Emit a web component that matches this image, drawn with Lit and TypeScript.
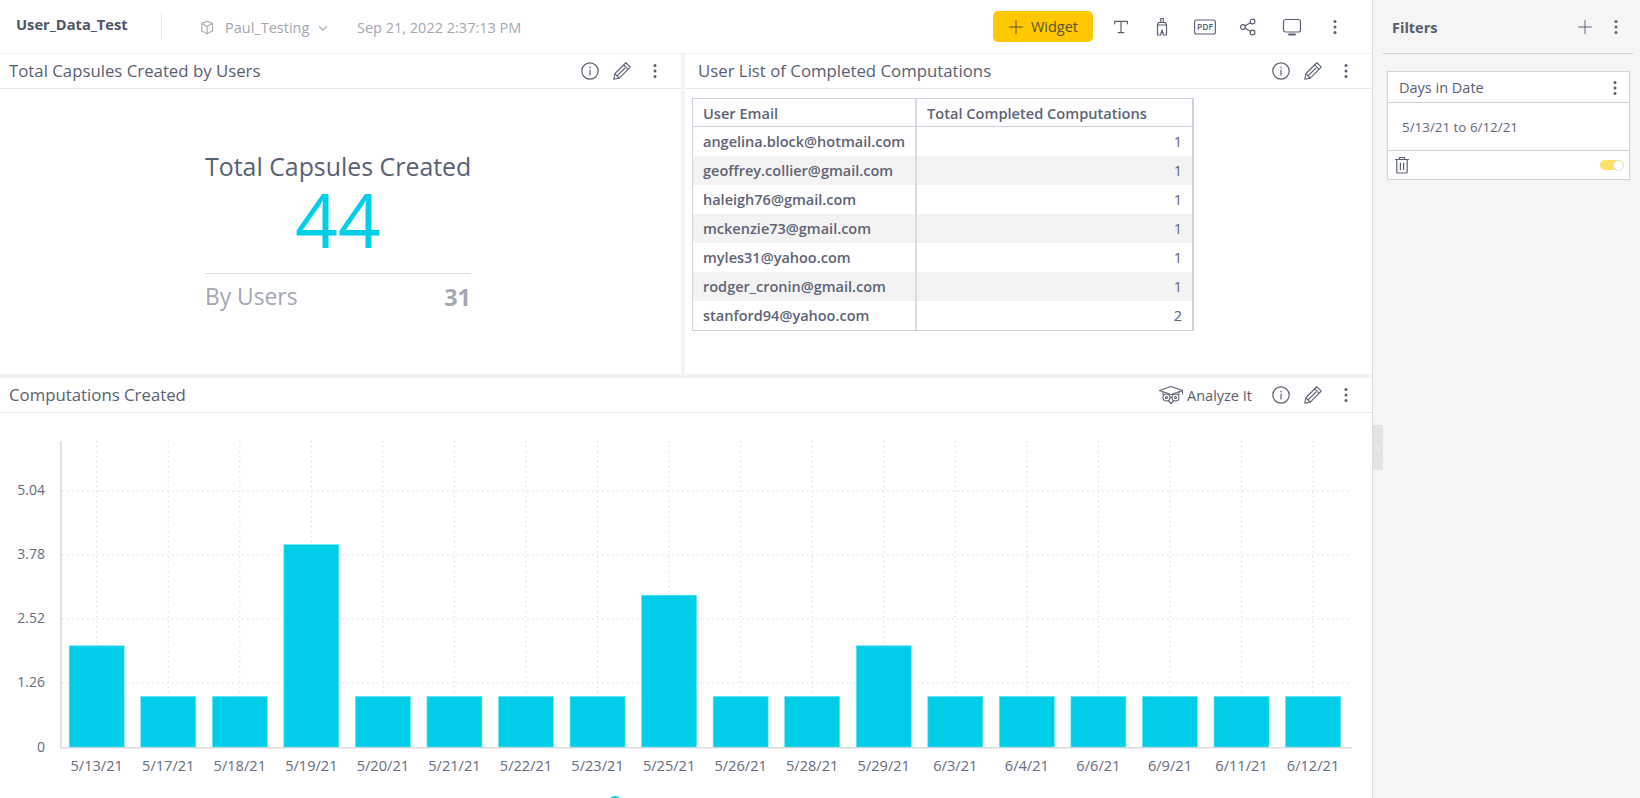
import { html, LitElement, css, svg } from "lit";
import { customElement } from "lit/decorators.js";
import { map } from "lit/directives/map.js";

const users = [
  ["angelina.block@hotmail.com", 1],
  ["geoffrey.collier@gmail.com", 1],
  ["haleigh76@gmail.com", 1],
  ["mckenzie73@gmail.com", 1],
  ["myles31@yahoo.com", 1],
  ["rodger_cronin@gmail.com", 1],
  ["stanford94@yahoo.com", 2],
];

const bars: [string, number][] = [
  ["5/13/21", 2],
  ["5/17/21", 1],
  ["5/18/21", 1],
  ["5/19/21", 4],
  ["5/20/21", 1],
  ["5/21/21", 1],
  ["5/22/21", 1],
  ["5/23/21", 1],
  ["5/25/21", 3],
  ["5/26/21", 1],
  ["5/28/21", 1],
  ["5/29/21", 2],
  ["6/3/21", 1],
  ["6/4/21", 1],
  ["6/6/21", 1],
  ["6/9/21", 1],
  ["6/11/21", 1],
  ["6/12/21", 1],
];

const ticks = ["1.26", "2.52", "3.78", "5.04"];

const icon = (w: number, body: unknown, sw = 1.2) =>
  html`<svg class="icon" width=${w} height=${w} viewBox="0 0 20 20" fill="none" stroke="currentColor" stroke-width=${sw} stroke-linecap="round" stroke-linejoin="round" aria-hidden="true">${body}</svg>`;

const info = icon(20, svg`<circle cx="10" cy="10" r="8.2"/><path d="M10 9v5M10 6.2v.6"/>`);
const pencil = icon(22, svg`<path d="M2.5 17.5l1-5L13.5 2.5l4 4L7.5 16.5zM3.5 12.5l4 4M11.5 4.5l4 4M5.5 14.5l7-7"/>`, 1);
const kebab = html`<svg class="icon" width="6" height="16" viewBox="0 0 6 16" fill="#5a6172" aria-hidden="true"><circle cx="3" cy="2.5" r="1.5"/><circle cx="3" cy="8" r="1.5"/><circle cx="3" cy="13.5" r="1.5"/></svg>`;
const cube = icon(18, svg`<path d="M9 2.5l6 2.6v8L9 16.5l-6-3.4v-8zM3 5.1l6 2.9 6-2.9M9 8v8.5"/>`);
const chevron = icon(12, svg`<path d="M4 7.5l6 6 6-6" stroke-width="1.8"/>`);
const plus = icon(16, svg`<path d="M10 2v16M2 10h16"/>`);
const textT = icon(16, svg`<path d="M2 6V3h16v3M10 3v14M6.5 17h7"/>`, 1.5);
const brush = icon(20, svg`<path d="M8.7 1.5h2.6v4H8.7zM5.5 8l1-2.5h7l1 2.5zM5.5 8v10h3l1.5-5 1.5 5h3V8"/>`);
const pdf = html`<svg class="icon" width="22" height="16" viewBox="0 0 22 16" fill="none" aria-hidden="true"><rect x="0.6" y="1" width="20.8" height="14" rx="2" stroke="currentColor" stroke-width="1.1"/><text x="11" y="11.2" text-anchor="middle" class="pdf">PDF</text></svg>`;
const share = icon(20, svg`<circle cx="5" cy="10" r="2.4"/><circle cx="14.5" cy="4.5" r="2.4"/><circle cx="14.5" cy="15.5" r="2.4"/><path d="M7.1 8.8l5.3-3.1M7.1 11.2l5.3 3.1"/>`);
const monitor = icon(20, svg`<rect x="1.5" y="2.5" width="17" height="12.5" rx="2"/><path d="M7 17.5h6" stroke-width="1.8"/>`);
const trash = icon(20, svg`<path d="M3.5 4.5h13M7.5 4.5V2.5h5v2M4.8 4.5v12.2c0 .8.6 1.3 1.3 1.3h7.8c.7 0 1.3-.5 1.3-1.3V4.5M8.4 8v6.5M11.6 8v6.5"/>`);
const owl = html`<svg class="icon" width="26" height="20" viewBox="0 0 26 20" fill="none" stroke="currentColor" stroke-width="1.1" stroke-linejoin="round" aria-hidden="true"><path d="M1.5 5.5L13 1.5l11.5 4L13 9.5zM5 7v3M21 7v3M24.5 5.5v4"/><circle cx="8.5" cy="12.5" r="3.5"/><circle cx="17.5" cy="12.5" r="3.5"/><circle cx="8.5" cy="12.5" r="1"/><circle cx="17.5" cy="12.5" r="1"/><path d="M12 12.5h2M10.5 16l2.5 2.5 2.5-2.5"/></svg>`;

@customElement("app-root")
export class AppRoot extends LitElement {
  static styles = css`
    :host {
      display: grid;
      grid-template-columns: 1373px 267px;
      height: 798px;
      overflow: hidden;
      font-family: "Open Sans", sans-serif;
      color: #5a6172;
      background: #fff;
      position: relative;
    }

    .icon {
      display: block;
      flex: none;
    }

    .pdf {
      font: 600 8.5px "Open Sans", sans-serif;
      fill: currentColor;
      stroke: none;
    }

    main {
      display: flex;
      flex-direction: column;
      min-width: 0;
      border-right: 1px solid #dcdcdc;
      box-sizing: border-box;
    }

    header {
      height: 54px;
      flex: none;
      box-sizing: border-box;
      border-bottom: 1px solid #f1f1f1;
      display: flex;
      align-items: center;
      padding: 0 0 0 16px;
      font-size: 14.5px;
      color: #a3a7b1;
    }

    .name {
      font-size: 14.7px;
      font-weight: 700;
      color: #4f5668;
      width: 145px;
      height: 27px;
      line-height: 23px;
      border-right: 1px solid #e6e6e6;
      margin-right: 37px;
    }

    .project {
      display: flex;
      align-items: center;
      gap: 8px;
      color: #a3a7b1;
      width: 158px;
      padding-top: 2px;
    }

    .date {
      padding-top: 2px;
    }

    .actions {
      margin-left: auto;
      display: flex;
      align-items: center;
      color: #5a6172;
      padding-right: 34px;
    }

    .widget {
      width: 100px;
      height: 31px;
      border-radius: 5px;
      background: #ffc800;
      color: #5a5330;
      display: flex;
      align-items: center;
      justify-content: center;
      gap: 7px;
      font-size: 14.5px;
    }

    .tool-text {
      margin-left: 20px;
    }

    .tool-brush {
      margin-left: 23px;
    }

    .tool-pdf,
    .tool-share {
      margin-left: 22px;
    }

    .tool-screen {
      margin-left: 24px;
    }

    .tool-more {
      margin-left: 30px;
    }

    .row {
      height: 324px;
      flex: none;
      box-sizing: border-box;
      display: grid;
      grid-template-columns: 681px 1fr;
      column-gap: 4px;
      background: #f3f3f3;
      padding-bottom: 4px;
    }

    .panel {
      background: #fff;
      min-width: 0;
    }

    .panel-head {
      height: 35px;
      box-sizing: border-box;
      border-bottom: 1px solid #e6e6e6;
      display: flex;
      align-items: center;
      padding: 0 23px 0 9px;
      font-size: 16.8px;
      gap: 11px;
    }

    .panel-head.wide {
      padding-left: 13px;
    }

    .panel-head .title {
      margin-right: auto;
      padding-bottom: 1px;
    }

    .panel-head .dots {
      margin-left: 8px;
    }

    .analyze {
      display: flex;
      align-items: center;
      gap: 3px;
      font-size: 14.5px;
      margin-right: 8px;
    }

    .kpi {
      width: 266px;
      margin: 0 0 0 205px;
      padding-top: 61px;
    }

    .kpi-title {
      font-size: 24.9px;
      line-height: 32px;
      margin-bottom: 1px;
      white-space: nowrap;
    }

    .kpi-value {
      font-size: 75px;
      font-weight: 400;
      line-height: 72px;
      color: #00cfe8;
      text-align: center;
      padding-bottom: 18px;
      border-bottom: 1px solid #dfe0e3;
    }

    .kpi-foot {
      display: flex;
      justify-content: space-between;
      align-items: center;
      font-size: 22.8px;
      line-height: 46px;
      color: #a3a8b3;
    }

    .kpi-foot b {
      font-size: 23.4px;
    }

    table {
      border-collapse: separate;
      border-spacing: 0;
      margin: 9px 0 0 7px;
      width: 502px;
      border: 1px solid #cfd1de;
      border-right-width: 2px;
      font-size: 14.5px;
      font-weight: 600;
      color: #5e6476;
    }

    th,
    td {
      height: 29px;
      box-sizing: border-box;
      padding: 0 10px;
      text-align: left;
      font-weight: 600;
    }

    th {
      border-bottom: 1px solid #cfd1de;
      height: 28px;
      font-size: 14.6px;
    }

    th:first-child,
    td:first-child {
      width: 224px;
      border-right: 2px solid #d8dae4;
      white-space: nowrap;
    }

    td.num {
      text-align: right;
      font-weight: 400;
    }

    tr.alt td {
      background: #f3f3f3;
    }

    .chart svg {
      display: block;
    }

    .chart text {
      font: 14px "Open Sans", sans-serif;
      fill: #666c7d;
    }

    .chart text.day {
      font-size: 14.6px;
    }

    aside {
      background: #f5f5f5;
      padding: 0 7px 0 10px;
    }

    .side-head {
      height: 54px;
      box-sizing: border-box;
      border-bottom: 1px solid #cfcfcf;
      display: flex;
      align-items: center;
      padding: 0 14px 0 9px;
      font-size: 14.5px;
      font-weight: 700;
      color: #565c6e;
    }

    .side-head span {
      margin-right: auto;
      padding-top: 2px;
    }

    .side-head .dots {
      margin-left: 20px;
    }

    .card {
      margin: 17px 0 0 4px;
      width: 243px;
      box-sizing: border-box;
      background: #fff;
      border: 1px solid #d2d2d2;
      font-size: 14.5px;
    }

    .card-head {
      height: 31px;
      box-sizing: border-box;
      border-bottom: 1px solid #d2d2d2;
      display: flex;
      align-items: center;
      justify-content: space-between;
      padding: 1px 11px 0;
    }

    .card-body {
      height: 48px;
      box-sizing: border-box;
      border-bottom: 1px solid #d2d2d2;
      padding: 0 14px;
      display: flex;
      align-items: center;
      font-size: 13.4px;
      color: #636979;
    }

    .card-foot {
      height: 28px;
      display: flex;
      align-items: center;
      justify-content: space-between;
      padding: 0 5px 0 4px;
    }

    .toggle {
      width: 24px;
      height: 10px;
      border-radius: 5px;
      background: #ffe169;
      position: relative;
    }

    .toggle::after {
      content: "";
      position: absolute;
      right: 0;
      top: -0.5px;
      width: 9px;
      height: 9px;
      border-radius: 50%;
      background: #fff;
      border: 1px solid #dcdcdc;
    }

    .handle {
      position: absolute;
      left: 1373px;
      top: 425px;
      width: 10px;
      height: 45px;
      background: #e3e3e3;
      color: #f5f5f5;
      font-size: 13px;
      line-height: 45px;
      text-align: center;
    }
  `;

  private panelHead(title: string, extra: unknown = null, wide = false) {
    return html`<div class="panel-head ${wide ? "wide" : ""}">
      <span class="title">${title}</span>
      ${extra} ${info} ${pencil}
      <span class="dots">${kebab}</span>
    </div>`;
  }

  private renderChart() {
    const base = 747;
    const unit = 50.6;
    const cx = (i: number) => 96.7 + i * 71.55;
    return html`<svg width="1372" height="385" viewBox="0 413 1372 385" aria-hidden="true">
      ${map(
        ticks,
        (t, i) => svg`
          <line x1="62" x2="1352" y1=${base - (i + 1) * 64} y2=${base - (i + 1) * 64} stroke="#d9d9d9" stroke-dasharray="1.5 3.5"/>
          <text x="45" y=${base - (i + 1) * 64 + 4} text-anchor="end">${t}</text>`
      )}
      <text x="45" y="752" text-anchor="end">0</text>
      ${map(
        bars,
        (_b, i) => svg`<line x1=${cx(i)} x2=${cx(i)} y1="441" y2=${base} stroke="#d9d9d9" stroke-dasharray="1.5 3.5"/>`
      )}
      <rect x="60" y="441" width="2" height="307" fill="#e2e2e2"/>
      <rect x="60" y="747" width="1292" height="1.5" fill="#dcdcdc"/>
      ${map(
        bars,
        ([label, value], i) => svg`
          <rect x=${cx(i) - 27.5} y=${base - value * unit} width="55" height=${value * unit} fill="#00cee8" stroke="#5fe6f5" stroke-width="0.6"/>
          <text class="day" x=${cx(i)} y="771" text-anchor="middle">${label}</text>`
      )}
      <circle cx="615" cy="803" r="7" fill="#00cee8"/>
    </svg>`;
  }

  render() {
    return html`<main>
        <header>
          <div class="name">User_Data_Test</div>
          <div class="project">${cube} Paul_Testing ${chevron}</div>
          <div class="date">Sep 21, 2022 2:37:13 PM</div>
          <div class="actions">
            <div class="widget">${plus} Widget</div>
            <span class="tool-text">${textT}</span>
            <span class="tool-brush">${brush}</span>
            <span class="tool-pdf">${pdf}</span>
            <span class="tool-share">${share}</span>
            <span class="tool-screen">${monitor}</span>
            <span class="tool-more">${kebab}</span>
          </div>
        </header>
        <div class="row">
          <section class="panel">
            ${this.panelHead("Total Capsules Created by Users")}
            <div class="kpi">
              <div class="kpi-title">Total Capsules Created</div>
              <div class="kpi-value">44</div>
              <div class="kpi-foot"><span>By Users</span><b>31</b></div>
            </div>
          </section>
          <section class="panel">
            ${this.panelHead("User List of Completed Computations", null, true)}
            <table>
              <thead>
                <tr><th>User Email</th><th>Total Completed Computations</th></tr>
              </thead>
              <tbody>
                ${map(
                  users,
                  ([email, count], i) =>
                    html`<tr class=${i % 2 ? "alt" : ""}><td>${email}</td><td class="num">${count}</td></tr>`
                )}
              </tbody>
            </table>
          </section>
        </div>
        <section class="panel">
          ${this.panelHead(
            "Computations Created",
            html`<span class="analyze">${owl} Analyze It</span>`
          )}
          <div class="chart">${this.renderChart()}</div>
        </section>
      </main>
      <aside>
        <div class="side-head">
          <span>Filters</span>
          ${plus}
          <div class="dots">${kebab}</div>
        </div>
        <div class="card">
          <div class="card-head">Days in Date ${kebab}</div>
          <div class="card-body">5/13/21 to 6/12/21</div>
          <div class="card-foot">${trash}<div class="toggle"></div></div>
        </div>
      </aside>
      <div class="handle">›</div>`;
  }
}

declare global {
  interface HTMLElementTagNameMap {
    "app-root": AppRoot;
  }
}
